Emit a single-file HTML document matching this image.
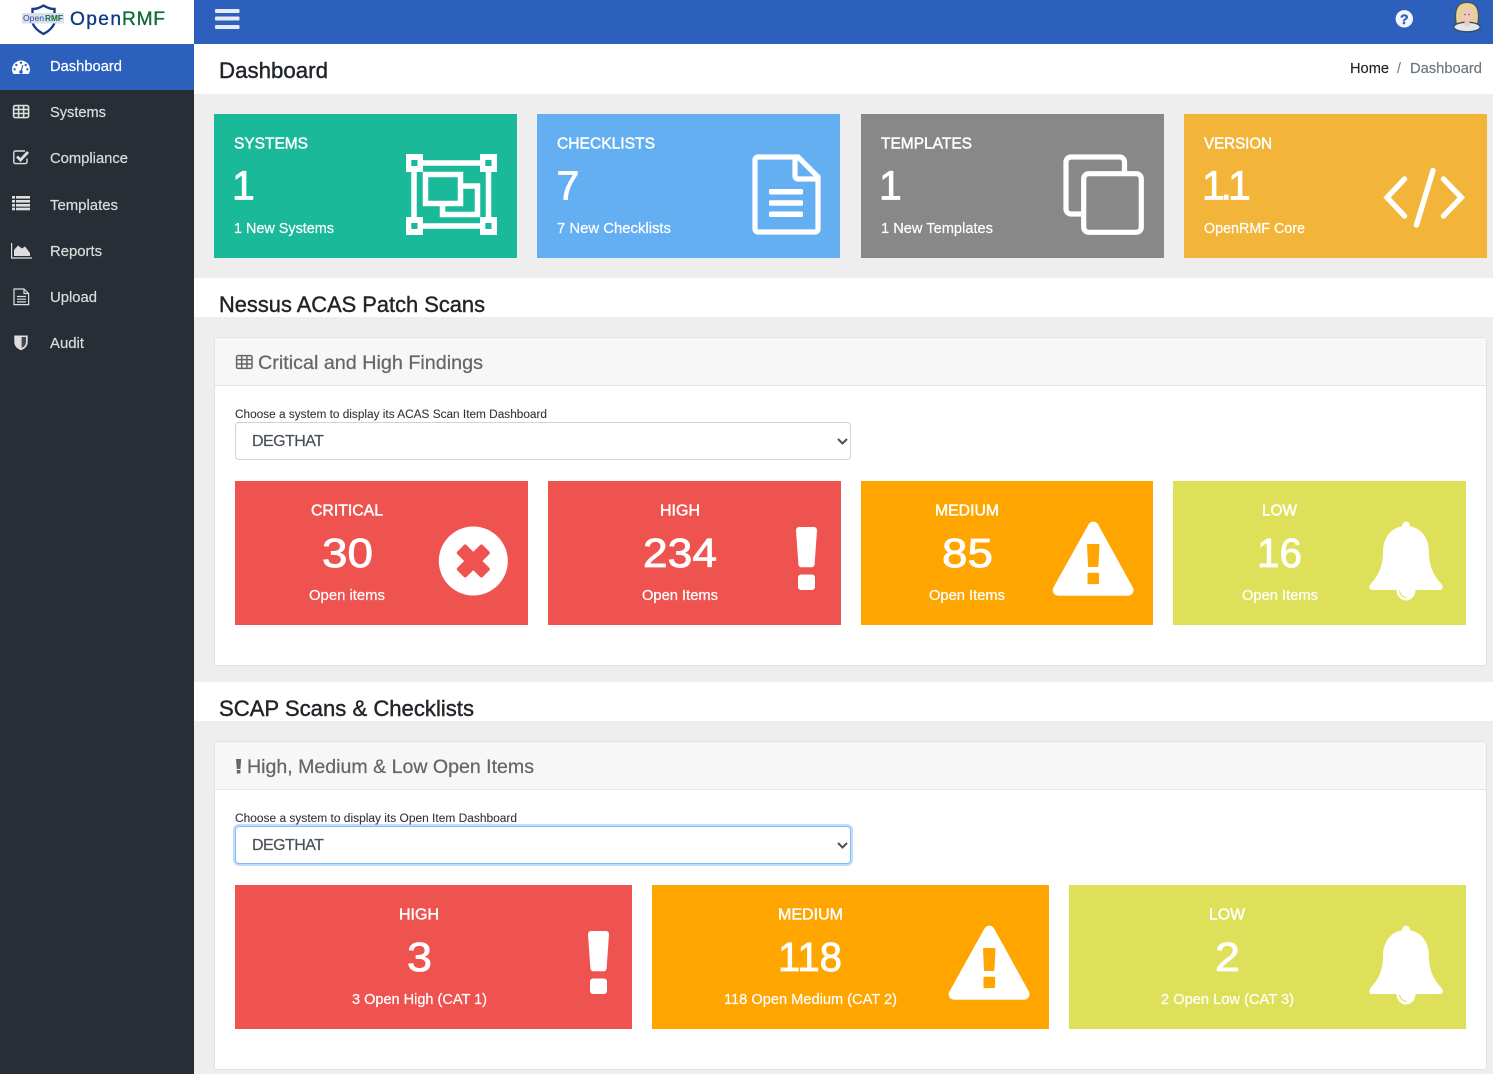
<!DOCTYPE html>
<html lang="en">
<head>
<meta charset="utf-8">
<title>OpenRMF Dashboard</title>
<style>
html,body{margin:0;padding:0;width:1493px;height:1074px;overflow:hidden;background:#eee;font-family:"Liberation Sans",Arial,sans-serif}
.b{position:absolute}
select{position:absolute;left:235px;width:616px;height:38px;box-sizing:border-box;background:#fff;border:1px solid #ced4da;border-radius:4px;padding:1px 0 0 16px;margin:0;font:16px "Liberation Sans",Arial,sans-serif;color:#495057;letter-spacing:-.55px;-webkit-text-stroke:.2px #495057;appearance:none;-webkit-appearance:none;outline:none}
select.f{border-color:#80bdff;box-shadow:0 0 0 2px rgba(0,123,255,.25)}
svg.o{position:absolute;left:0;top:0;pointer-events:none}
text{font-family:"Liberation Sans",Arial,sans-serif;white-space:pre}
.n{font-size:14.4px;fill:#dcdcdc;stroke:#dcdcdc;stroke-width:.2}
.h{font-size:16px;fill:#fff;stroke:#fff;stroke-width:.45}
.v{font-size:41px;fill:#fff;stroke:#fff;stroke-width:.8}
.s{font-size:14.4px;fill:#fff;stroke:#fff;stroke-width:.2}
.t{font-size:22px;fill:#212529;stroke:#212529;stroke-width:.4}
.p{font-size:19.5px;fill:#666;stroke:#666;stroke-width:.25}
.l{font-size:11.5px;fill:#333;stroke:#333;stroke-width:.08}
</style>
</head>
<body>
<div class="b" style="left:0;top:0;width:194px;height:1074px;background:#272e35"></div>
<div class="b" style="left:0;top:0;width:194px;height:44px;background:#fff"></div>
<div class="b" style="left:0;top:44px;width:194px;height:46px;background:#2d5fbd"></div>
<div class="b" style="left:194px;top:0;width:1299px;height:44px;background:#2d5fbd"></div>
<div class="b" style="left:194px;top:44px;width:1299px;height:50px;background:#fff"></div>
<div class="b" style="left:194px;top:278px;width:1299px;height:39px;background:#fff"></div>
<div class="b" style="left:194px;top:682px;width:1299px;height:39px;background:#fff"></div>

<div class="b" style="left:214px;top:114px;width:303px;height:144px;background:#1ab99a"></div>
<div class="b" style="left:537px;top:114px;width:303px;height:144px;background:#64aff2"></div>
<div class="b" style="left:861px;top:114px;width:303px;height:144px;background:#888888"></div>
<div class="b" style="left:1184px;top:114px;width:303px;height:144px;background:#f2b53a"></div>

<div class="b" style="left:214px;top:337px;width:1273px;height:329px;box-sizing:border-box;background:#fff;border:1px solid #e3e3e3;border-radius:3px"></div>
<div class="b" style="left:215px;top:338px;width:1271px;height:48px;box-sizing:border-box;background:#f7f7f7;border-bottom:1px solid #e5e5e5"></div>
<div class="b" style="left:214px;top:741px;width:1273px;height:329px;box-sizing:border-box;background:#fff;border:1px solid #e3e3e3;border-radius:3px"></div>
<div class="b" style="left:215px;top:742px;width:1271px;height:48px;box-sizing:border-box;background:#f7f7f7;border-bottom:1px solid #e5e5e5"></div>

<select style="top:422px"><option>DEGTHAT</option></select>
<select class="f" style="top:826px"><option>DEGTHAT</option></select>

<div class="b" style="left:235px;top:481px;width:293px;height:144px;background:#ef5350"></div>
<div class="b" style="left:548px;top:481px;width:293px;height:144px;background:#ef5350"></div>
<div class="b" style="left:861px;top:481px;width:292px;height:144px;background:#ffa500"></div>
<div class="b" style="left:1173px;top:481px;width:293px;height:144px;background:#dfe05a"></div>
<div class="b" style="left:235px;top:885px;width:397px;height:144px;background:#ef5350"></div>
<div class="b" style="left:652px;top:885px;width:397px;height:144px;background:#ffa500"></div>
<div class="b" style="left:1069px;top:885px;width:397px;height:144px;background:#dfe05a"></div>

<svg class="o" width="1493" height="1074" viewBox="0 0 1493 1074" xmlns="http://www.w3.org/2000/svg">
<!-- logo -->
<path d="M32.5 9 Q38 9 43.5 5.5 Q49 9 54.5 9 V23 Q52 29.5 43.5 34 Q35 29.5 32.5 23Z" fill="#fff" stroke="#1c3a87" stroke-width="2.4"/>
<rect x="22" y="13" width="42" height="10.5" fill="#d9dfee"/>
<text x="23" y="21" font-size="8" textLength="21" lengthAdjust="spacingAndGlyphs" fill="#2c4a94">Open</text>
<text x="45" y="21" font-size="8" textLength="18" lengthAdjust="spacingAndGlyphs" fill="#146b3a" font-weight="bold">RMF</text>
<text x="70" y="25" font-size="19.2" textLength="51" fill="#0f3a8a" stroke="#0f3a8a" stroke-width=".35">Open</text>
<text x="122" y="25" font-size="19.2" textLength="43" fill="#146b3a" stroke="#146b3a" stroke-width=".35">RMF</text>

<!-- header -->
<g fill="#e6eaf4"><rect x="215" y="9" width="24.5" height="4" rx="1"/><rect x="215" y="16.5" width="24.5" height="4" rx="1"/><rect x="215" y="25" width="24.5" height="4" rx="1"/></g>
<circle cx="1404.3" cy="18.8" r="8.7" fill="#f3f6fc"/>
<text x="1404.3" y="23.8" font-size="14" font-weight="bold" fill="#2d5fbd" stroke="#2d5fbd" stroke-width=".4" text-anchor="middle">?</text>
<path d="M1456.5 25 C1454 12 1456 2.5 1467 2.5 C1478 2.5 1480 12 1477.5 25Z" fill="#e6d19a" stroke="#4d4d46" stroke-width="1.1"/>
<ellipse cx="1467" cy="27" rx="13.2" ry="4.8" fill="#dfe7ec" stroke="#3d4a55" stroke-width="1.3"/>
<path d="M1464.5 19 V25 Q1467 27.5 1469.5 25 V19Z" fill="#eec8b8"/>
<path d="M1461.5 12 Q1465.5 11 1467.5 7 Q1470 11 1472.5 12 Q1473 20.5 1467 22 Q1461 20.5 1461.5 12Z" fill="#eec8b8"/>
<circle cx="1465" cy="14.5" r=".8" fill="#6b5a50"/><circle cx="1469" cy="14.5" r=".8" fill="#6b5a50"/>

<!-- sidebar icons -->
<path d="M12 69.5 a9 9 0 0 1 18 0 c0 2-.8 3.6-1.5 4.5 H13.5 c-.7-.9-1.5-2.5-1.5-4.5Z" fill="#fff"/>
<g fill="#2d5fbd"><circle cx="21" cy="62.8" r="1.2"/><circle cx="16.3" cy="65" r="1.2"/><circle cx="25.7" cy="65" r="1.2"/><circle cx="14.6" cy="69.3" r="1.2"/><circle cx="27.4" cy="69.3" r="1.2"/><circle cx="21" cy="72" r="1.8"/></g>
<path d="M21 72 L22.8 65" stroke="#2d5fbd" stroke-width="1.2"/>
<g fill="none" stroke="#dedede" stroke-width="1.6"><rect x="13.6" y="105.6" width="15" height="12" rx="1.6"/><path d="M13.6 109.4 H28.6 M13.6 113.5 H28.6 M18.6 105.6 V117.6 M23.6 105.6 V117.6"/></g>
<path d="M27 158.5 V162 a1.6 1.6 0 0 1-1.6 1.6 H15.4 a1.6 1.6 0 0 1-1.6-1.6 V152.6 a1.6 1.6 0 0 1 1.6-1.6 H25" fill="none" stroke="#dedede" stroke-width="1.4"/>
<path d="M17 156.5 L20.5 160 L28 152" fill="none" stroke="#dedede" stroke-width="2.8"/>
<g fill="#dedede"><rect x="12" y="196" width="3" height="2.6"/><rect x="12" y="200" width="3" height="2.6"/><rect x="12" y="204" width="3" height="2.6"/><rect x="12" y="207.7" width="3" height="2.6"/><rect x="16" y="196" width="14" height="2.6"/><rect x="16" y="200" width="14" height="2.6"/><rect x="16" y="204" width="14" height="2.6"/><rect x="16" y="207.7" width="14" height="2.6"/></g>
<path d="M11.6 243 V258 H32" fill="none" stroke="#dedede" stroke-width="1.2"/>
<path d="M14 256 V250 L18 245.5 L22 248.5 L25 246.5 L30 253 V256Z" fill="#dedede"/>
<g fill="none" stroke="#dedede" stroke-width="1.2"><path d="M14 289 H24 L28.6 293.5 V304.6 H14Z"/><path d="M24 289 V293.5 H28.6"/><path d="M17 296.5 H26 M17 299.2 H26 M17 301.9 H26"/></g>
<path d="M14.3 335.5 Q21 335.5 27.7 335.5 V342 Q27.7 347.5 21 350.3 Q14.3 347.5 14.3 342Z" fill="#dedede"/>
<path d="M21.6 337 H26 V342 Q26 345.8 21.6 348Z" fill="#272e35" opacity=".85"/>

<!-- sidebar text -->
<text class="n" x="50" y="71" textLength="72" lengthAdjust="spacingAndGlyphs" style="fill:#fff;stroke:#fff">Dashboard</text>
<text class="n" x="50" y="117" textLength="56" lengthAdjust="spacingAndGlyphs">Systems</text>
<text class="n" x="50" y="163" textLength="78" lengthAdjust="spacingAndGlyphs">Compliance</text>
<text class="n" x="50" y="210" textLength="68" lengthAdjust="spacingAndGlyphs">Templates</text>
<text class="n" x="50" y="256" textLength="52" lengthAdjust="spacingAndGlyphs">Reports</text>
<text class="n" x="50" y="302" textLength="47" lengthAdjust="spacingAndGlyphs">Upload</text>
<text class="n" x="50" y="348" textLength="34" lengthAdjust="spacingAndGlyphs">Audit</text>

<!-- page heading -->
<text class="t" x="219" y="78" textLength="109" lengthAdjust="spacingAndGlyphs">Dashboard</text>
<text x="1350" y="73" font-size="14.4" fill="#212529" stroke="#212529" stroke-width=".15" textLength="39" lengthAdjust="spacingAndGlyphs">Home</text>
<text x="1397" y="73" font-size="14.4" fill="#6c757d">/</text>
<text x="1410" y="73" font-size="14.4" fill="#6c757d" stroke="#6c757d" stroke-width=".15" textLength="72" lengthAdjust="spacingAndGlyphs">Dashboard</text>
<text class="t" x="219" y="312" textLength="266" lengthAdjust="spacingAndGlyphs">Nessus ACAS Patch Scans</text>
<text class="t" x="219" y="716" textLength="255" lengthAdjust="spacingAndGlyphs">SCAP Scans &amp; Checklists</text>

<!-- top cards -->
<text class="h" x="234" y="148.6" textLength="74" lengthAdjust="spacingAndGlyphs">SYSTEMS</text>
<text class="v" x="232" y="199.5">1</text>
<text class="s" x="234" y="233" textLength="100" lengthAdjust="spacingAndGlyphs">1 New Systems</text>
<text class="h" x="557" y="148.6" textLength="98" lengthAdjust="spacingAndGlyphs">CHECKLISTS</text>
<text class="v" x="556.5" y="199.5">7</text>
<text class="s" x="557" y="233" textLength="114" lengthAdjust="spacingAndGlyphs">7 New Checklists</text>
<text class="h" x="881" y="148.6" textLength="91" lengthAdjust="spacingAndGlyphs">TEMPLATES</text>
<text class="v" x="879" y="199.5">1</text>
<text class="s" x="881" y="233" textLength="112" lengthAdjust="spacingAndGlyphs">1 New Templates</text>
<text class="h" x="1204" y="148.6" textLength="68" lengthAdjust="spacingAndGlyphs">VERSION</text>
<text class="v" x="1202 1220.5 1228" y="199.5">1.1</text>
<text class="s" x="1204" y="233" textLength="101" lengthAdjust="spacingAndGlyphs">OpenRMF Core</text>

<!-- focus icon -->
<g fill="none" stroke="#fff" stroke-width="5.5">
<path d="M414 163 H488.5 V226 H414Z"/>
<rect x="425.5" y="174.5" width="35" height="29"/>
<path d="M462 186 H477.5 V214.5 H442.5 V205"/>
</g>
<g fill="#fff"><rect x="406" y="154" width="17" height="18"/><rect x="480" y="154" width="17" height="18"/><rect x="406" y="217" width="17" height="18"/><rect x="480" y="217" width="17" height="18"/></g>
<g fill="#1ab99a"><rect x="411.3" y="160" width="6.2" height="6"/><rect x="485.3" y="160" width="6.2" height="6"/><rect x="411.3" y="223" width="6.2" height="6"/><rect x="485.3" y="223" width="6.2" height="6"/></g>

<!-- doc icon -->
<g fill="none" stroke="#fff" stroke-width="5.2">
<path d="M758 157 H798 L818 177 V229 a3 3 0 0 1-3 3 H758 a3 3 0 0 1-3-3 V160 a3 3 0 0 1 3-3Z"/>
<path d="M795 157 V176 a3 3 0 0 0 3 3 H818"/>
</g>
<g fill="#fff"><rect x="769" y="189" width="34" height="5.5" rx="1.5"/><rect x="769" y="200.3" width="34" height="5.5" rx="1.5"/><rect x="769" y="211.5" width="34" height="5.5" rx="1.5"/></g>

<!-- copy icon -->
<g fill="none" stroke="#fff" stroke-width="5.2">
<rect x="1083.7" y="173.7" width="57.6" height="58.6" rx="5"/>
<path d="M1124.5 171 V162 a5 5 0 0 0-5-5 H1071 a5 5 0 0 0-5 5 V209 a5 5 0 0 0 5 5 H1081"/>
</g>

<!-- code icon -->
<g fill="none" stroke="#fff" stroke-width="5.4" stroke-linecap="round" stroke-linejoin="miter">
<path d="M1404.5 179 L1387 197.5 L1404.5 216"/>
<path d="M1443.5 179 L1461.3 197.5 L1443.5 216"/>
<path d="M1433 170.5 L1416.5 225"/>
</g>

<!-- panel 1 -->
<g fill="none" stroke="#666" stroke-width="1.5"><rect x="236.6" y="355.6" width="15.4" height="12.8" rx="1.4"/><path d="M236.6 359.6 H252 M236.6 364 H252 M241.7 355.6 V368.4 M246.9 355.6 V368.4"/></g>
<text class="p" x="258" y="369" textLength="225" lengthAdjust="spacingAndGlyphs">Critical and High Findings</text>
<text class="l" x="235" y="418" textLength="312" lengthAdjust="spacingAndGlyphs">Choose a system to display its ACAS Scan Item Dashboard</text>
<path d="M838 439 L842.5 443.5 L847 439" fill="none" stroke="#4a5058" stroke-width="2"/>

<text class="h" x="311" y="515.6" textLength="72" lengthAdjust="spacingAndGlyphs">CRITICAL</text>
<text class="v" x="322" y="567" textLength="51" lengthAdjust="spacingAndGlyphs">30</text>
<text class="s" x="309" y="600" textLength="76" lengthAdjust="spacingAndGlyphs">Open items</text>
<circle cx="473.3" cy="561" r="34.5" fill="#fff"/>
<g transform="translate(473.3 561) rotate(45)" fill="#ef5350"><rect x="-18" y="-6.5" width="36" height="13" rx="2"/><rect x="-6.5" y="-18" width="13" height="36" rx="2"/></g>

<text class="h" x="660" y="515.6" textLength="40" lengthAdjust="spacingAndGlyphs">HIGH</text>
<text class="v" x="643" y="567" textLength="74" lengthAdjust="spacingAndGlyphs">234</text>
<text class="s" x="642" y="600" textLength="76" lengthAdjust="spacingAndGlyphs">Open Items</text>
<path id="ex" d="M799 527 H814 a3 3 0 0 1 3 3.2 L814.6 564.5 a3 3 0 0 1-3 2.8 H801.4 a3 3 0 0 1-3-2.8 L796 530.2 a3 3 0 0 1 3-3.2Z M801 574.5 H812 a3 3 0 0 1 3 3 V587 a3 3 0 0 1-3 3 H801 a3 3 0 0 1-3-3 V577.5 a3 3 0 0 1 3-3Z" fill="#fff"/>

<text class="h" x="935" y="515.6" textLength="64" lengthAdjust="spacingAndGlyphs">MEDIUM</text>
<text class="v" x="942" y="567" textLength="51" lengthAdjust="spacingAndGlyphs">85</text>
<text class="s" x="929" y="600" textLength="76" lengthAdjust="spacingAndGlyphs">Open Items</text>
<path d="M1093.3 527.2 L1058.2 590.2 H1128 Z" fill="#fff" stroke="#fff" stroke-width="11" stroke-linejoin="round"/>
<g fill="#ffa500"><path d="M1088 544 H1098.5 a1 1 0 0 1 1 1 L1098.4 566 a1 1 0 0 1-1 1 H1089 a1 1 0 0 1-1-1 L1087 545 a1 1 0 0 1 1-1Z"/><rect x="1087.5" y="572.7" width="11.6" height="11.4" rx="1.2"/></g>

<text class="h" x="1262" y="515.6" textLength="35" lengthAdjust="spacingAndGlyphs">LOW</text>
<text class="v" x="1257" y="567" textLength="45" lengthAdjust="spacingAndGlyphs">16</text>
<text class="s" x="1242" y="600" textLength="76" lengthAdjust="spacingAndGlyphs">Open Items</text>
<g id="bell">
<circle cx="1406" cy="525.5" r="3.9" fill="#fff"/>
<path d="M1406 526 C1392 526 1383 537 1383 552 C1383 567 1378 576 1370.5 584 Q1367 590 1373 590 H1439 Q1445 590 1441.5 584 C1434 576 1429 567 1429 552 C1429 537 1420 526 1406 526Z" fill="#fff"/>
<path d="M1396.5 590 a9.5 10.5 0 0 0 19 0Z" fill="#fff"/>
<path d="M1399.6 590.8 a7.2 7.2 0 0 0 7.2 6.6" fill="none" stroke="#dfe05a" stroke-width="1.1"/>
</g>

<!-- panel 2 -->
<path d="M236 759 H241.2 L240.4 769 H236.8Z M236.8 770 H240.4 V773.5 H236.8Z" fill="#666"/>
<text class="p" x="247" y="773" textLength="287" lengthAdjust="spacingAndGlyphs">High, Medium &amp; Low Open Items</text>
<text class="l" x="235" y="822" textLength="282" lengthAdjust="spacingAndGlyphs">Choose a system to display its Open Item Dashboard</text>
<path d="M838 843 L842.5 847.5 L847 843" fill="none" stroke="#4a5058" stroke-width="2"/>

<text class="h" x="399" y="919.6" textLength="40" lengthAdjust="spacingAndGlyphs">HIGH</text>
<text class="v" x="407" y="971" textLength="25" lengthAdjust="spacingAndGlyphs">3</text>
<text class="s" x="352" y="1004" textLength="135" lengthAdjust="spacingAndGlyphs">3 Open High (CAT 1)</text>
<use href="#ex" transform="translate(-208 404)"/>

<text class="h" x="778" y="919.6" textLength="65" lengthAdjust="spacingAndGlyphs">MEDIUM</text>
<text class="v" x="778" y="971" textLength="64" lengthAdjust="spacingAndGlyphs">118</text>
<text class="s" x="724" y="1004" textLength="173" lengthAdjust="spacingAndGlyphs">118 Open Medium (CAT 2)</text>
<path d="M989.3 931.2 L954.2 994.2 H1024 Z" fill="#fff" stroke="#fff" stroke-width="11" stroke-linejoin="round"/>
<g fill="#ffa500"><path d="M984 948 H994.5 a1 1 0 0 1 1 1 L994.4 970 a1 1 0 0 1-1 1 H985 a1 1 0 0 1-1-1 L983 949 a1 1 0 0 1 1-1Z"/><rect x="983.5" y="976.7" width="11.6" height="11.4" rx="1.2"/></g>

<text class="h" x="1209" y="919.6" textLength="36" lengthAdjust="spacingAndGlyphs">LOW</text>
<text class="v" x="1215" y="971" textLength="25" lengthAdjust="spacingAndGlyphs">2</text>
<text class="s" x="1161" y="1004" textLength="133" lengthAdjust="spacingAndGlyphs">2 Open Low (CAT 3)</text>
<use href="#bell" transform="translate(0 404)"/>
</svg>
</body>
</html>
